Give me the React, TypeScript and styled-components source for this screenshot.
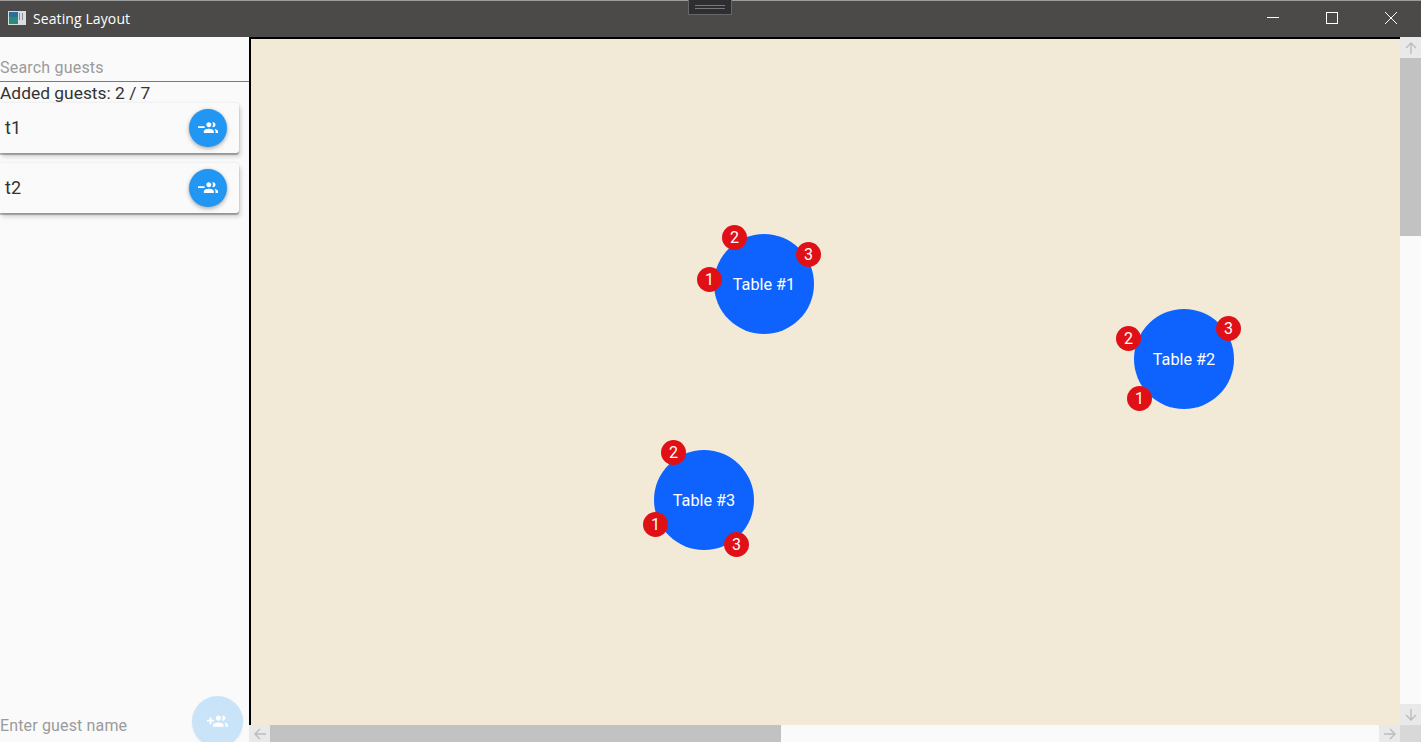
import React from "react";
import styled, { createGlobalStyle } from "styled-components";

const GlobalStyle = createGlobalStyle`
  html, body {
    margin: 0;
    padding: 0;
    width: 100%;
    height: 100%;
    overflow: hidden;
    background: #fafafa;
    font-family: Roboto, "Liberation Sans", sans-serif;
  }
  #root { height: 100%; }
`;

const Window = styled.div`
  display: flex;
  flex-direction: column;
  width: 1421px;
  height: 742px;
  overflow: hidden;
`;

const TitleBar = styled.header`
  position: relative;
  display: flex;
  align-items: center;
  flex: 0 0 37px;
  box-sizing: border-box;
  padding: 0 1px 2px 0;
  border-top: 1px solid #9c9c9c;
  background: #4b4a48;
  color: #fff;
`;

const AppIcon = styled.svg`
  width: 18px;
  height: 14px;
  margin: 0 7px 0 8px;
`;

const Title = styled.span`
  flex: 1;
  font-family: "Open Sans", "Noto Sans", sans-serif;
  font-size: 14px;
  letter-spacing: 0.1px;
`;

const DragHandle = styled.div`
  position: absolute;
  top: -1px;
  left: 688px;
  display: flex;
  flex-direction: column;
  justify-content: center;
  gap: 2px;
  box-sizing: border-box;
  width: 44px;
  height: 15px;
  padding: 0 6px;
  background: #2e2e31;
  border: 1px solid #66676a;
  border-top: 0;
`;

const HandleLine = styled.div`
  height: 1px;
  background: #77787a;
`;

const WindowButton = styled.button`
  display: flex;
  align-items: center;
  justify-content: center;
  width: 59px;
  height: 34px;
  padding: 0;
  border: 0;
  background: transparent;
  color: #fff;
`;

const Body = styled.div`
  display: flex;
  flex: 1;
  min-height: 0;
`;

const Sidebar = styled.aside`
  display: flex;
  flex-direction: column;
  flex: 0 0 249px;
  overflow: hidden;
  background: #fafafa;
`;

const SearchInput = styled.input`
  display: block;
  box-sizing: border-box;
  width: 100%;
  height: 45px;
  padding: 17px 0 0;
  border: 0;
  border-bottom: 1px solid #7a7a7a;
  outline: 0;
  background: transparent;
  font: 16px Roboto, sans-serif;
  letter-spacing: 0.2px;
  &::placeholder { color: #9b9b9b; opacity: 1; }
`;

const Counter = styled.div`
  box-sizing: border-box;
  height: 21px;
  padding-top: 1px;
  font-size: 17.4px;
  line-height: 21px;
  color: #333;
`;

const GuestList = styled.ul`
  display: flex;
  flex-direction: column;
  flex: 1;
  gap: 10px;
  margin: 0;
  padding: 0 10px 0 0;
  list-style: none;
`;

const GuestCard = styled.li`
  display: flex;
  align-items: center;
  justify-content: space-between;
  height: 50px;
  padding: 0 12px 0 5px;
  border-radius: 0 3px 3px 0;
  background: #fafafa;
  box-shadow: 0 2px 1px rgba(0, 0, 0, 0.28), 2px 4px 4px rgba(0, 0, 0, 0.14), 0 0 3px rgba(0, 0, 0, 0.1);
`;

const GuestName = styled.span`
  margin-top: -2px;
  font-size: 18px;
  color: #333;
`;

const RoundButton = styled.button<{ $size: number; $faded?: boolean }>`
  display: flex;
  align-items: center;
  justify-content: center;
  flex: none;
  width: ${({ $size }) => $size}px;
  height: ${({ $size }) => $size}px;
  padding: 0;
  border: 0;
  border-radius: 50%;
  color: #fff;
  background: ${({ $faded }) => ($faded ? "#c9e3f9" : "#2196f3")};
  box-shadow: ${({ $faded }) =>
    $faded ? "0 1px 2px rgba(0,0,0,0.08)" : "0 2px 4px rgba(0,0,0,0.28), 0 0 3px rgba(0,0,0,0.12)"};
`;

const AddRow = styled.div`
  display: flex;
  align-items: flex-end;
  gap: 10px;
  height: 46px;
  padding-right: 6px;
`;

const NameInput = styled.input`
  flex: 1;
  min-width: 0;
  box-sizing: border-box;
  height: 34px;
  padding: 0;
  border: 0;
  outline: 0;
  background: transparent;
  font: 16px Roboto, sans-serif;
  letter-spacing: 0.15px;
  &::placeholder { color: #9b9b9b; opacity: 1; }
`;

const AddButtonSlot = styled.div`
  margin-bottom: -5px;
`;

const Workspace = styled.main`
  display: grid;
  flex: 1;
  grid-template-columns: 1151px 21px;
  grid-template-rows: 688px 17px;
  min-width: 0;
`;

const Canvas = styled.div`
  position: relative;
  overflow: hidden;
  border-top: 2px solid #000;
  border-left: 2px solid #000;
  background: #f2e9d7;
`;

const TableCircle = styled.div<{ $x: number; $y: number }>`
  position: absolute;
  left: ${({ $x }) => $x - 50 - 251}px;
  top: ${({ $y }) => $y - 50 - 39}px;
  display: flex;
  align-items: center;
  justify-content: center;
  width: 100px;
  height: 100px;
  border-radius: 50%;
  background: #0e63ff;
  color: #fff;
  font-size: 16.2px;
`;

const Seat = styled.span<{ $dx: number; $dy: number }>`
  position: absolute;
  left: ${({ $dx }) => 50 + $dx - 12.5}px;
  top: ${({ $dy }) => 50 + $dy - 12.5}px;
  display: flex;
  align-items: center;
  justify-content: center;
  width: 25px;
  height: 25px;
  border-radius: 50%;
  background: #df1116;
  color: #fff;
  font-size: 16px;
`;

const VerticalBar = styled.div`
  display: flex;
  flex-direction: column;
  background: #fafafa;
`;

const HorizontalBar = styled.div`
  display: flex;
  background: #fafafa;
`;

const ArrowButton = styled.div<{ $long?: boolean }>`
  display: flex;
  align-items: center;
  justify-content: center;
  flex: none;
  width: 21px;
  height: ${({ $long }) => ($long ? "21px" : "100%")};
  background: #e9e9e9;
  color: #bcbcbc;
`;

const VThumb = styled.div`
  flex: 0 0 178px;
  background: #c2c2c2;
`;

const HThumb = styled.div`
  flex: 0 0 511px;
  background: #c2c2c2;
`;

const Track = styled.div`
  flex: 1;
`;

const Corner = styled.div`
  background: #d8d8d8;
`;

const GROUP =
  "M18 11c1.66 0 2.99-1.34 2.99-3S19.66 5 18 5c-.32 0-.63.05-.91.14.57.81.9 1.79.9 2.86s-.34 2.04-.9 2.86c.28.09.59.14.91.14zm-5 0c1.66 0 2.99-1.34 2.99-3S14.66 5 13 5s-3 1.34-3 3 1.34 3 3 3zm6.62 2.16c.83.73 1.38 1.66 1.38 2.84v2h3v-2c0-1.54-2.37-2.49-4.38-2.84zM13 13c-2 0-6 1-6 3v2h12v-2c0-2-4-3-6-3z";

const GroupRemoveIcon = () => (
  <svg width="20" height="20" viewBox="0 0 24 24" fill="currentColor">
    <path d={`M8 10H0v2h8v-2z${GROUP}`} />
  </svg>
);

const GroupAddIcon = () => (
  <svg width="21" height="21" viewBox="0 0 24 24" fill="currentColor">
    <path d={`M8 10H5V7H3v3H0v2h3v3h2v-3h3v-2z${GROUP}`} />
  </svg>
);

const Arrow = ({ rotate }: { rotate: number }) => (
  <svg width="14" height="14" viewBox="0 0 14 14" fill="none" stroke="currentColor" strokeWidth="1.4" transform={`rotate(${rotate})`}>
    <path d="M7 13V2M2 7l5-5 5 5" />
  </svg>
);

const tables = [
  { name: "Table #1", x: 764, y: 284, seats: [[-54.5, -5], [-29.5, -47], [44.5, -30]] },
  { name: "Table #2", x: 1184, y: 359, seats: [[-44.5, 39], [-55.5, -21], [44.5, -31]] },
  { name: "Table #3", x: 704, y: 500, seats: [[-48.5, 24], [-30.5, -48], [32.5, 44]] },
];

const guests = ["t1", "t2"];

export default function App() {
  return (
    <Window>
      <GlobalStyle />
      <TitleBar>
        <AppIcon viewBox="0 0 18 14">
          <rect width="18" height="14" fill="#d8dde0" />
          <rect x="1" y="1" width="9" height="12" fill="#2c8a78" />
          <rect x="1" y="1" width="9" height="5" fill="#2a6f9c" />
          <rect x="11" y="2" width="1" height="7" fill="#8a8f92" />
          <rect x="14" y="2" width="1" height="7" fill="#8a8f92" />
        </AppIcon>
        <Title>Seating Layout</Title>
        <DragHandle>
          <HandleLine />
          <HandleLine />
        </DragHandle>
        <WindowButton aria-label="Minimize">
          <svg width="12" height="12" viewBox="0 0 12 12" stroke="currentColor">
            <path d="M0 5.5h12" />
          </svg>
        </WindowButton>
        <WindowButton aria-label="Maximize">
          <svg width="12" height="12" viewBox="0 0 12 12" fill="none" stroke="currentColor">
            <rect x=".5" y=".5" width="11" height="11" />
          </svg>
        </WindowButton>
        <WindowButton aria-label="Close">
          <svg width="12" height="12" viewBox="0 0 12 12" stroke="currentColor">
            <path d="M0 0l12 12M12 0L0 12" />
          </svg>
        </WindowButton>
      </TitleBar>
      <Body>
        <Sidebar>
          <SearchInput placeholder="Search guests" />
          <Counter>Added guests: 2 / 7</Counter>
          <GuestList>
            {guests.map((guest) => (
              <GuestCard key={guest}>
                <GuestName>{guest}</GuestName>
                <RoundButton $size={38}>
                  <GroupRemoveIcon />
                </RoundButton>
              </GuestCard>
            ))}
          </GuestList>
          <AddRow>
            <NameInput placeholder="Enter guest name" />
            <AddButtonSlot>
              <RoundButton $size={51} $faded>
                <GroupAddIcon />
              </RoundButton>
            </AddButtonSlot>
          </AddRow>
        </Sidebar>
        <Workspace>
          <Canvas>
            {tables.map((table) => (
              <TableCircle key={table.name} $x={table.x} $y={table.y}>
                {table.name}
                {table.seats.map(([dx, dy], index) => (
                  <Seat key={index} $dx={dx} $dy={dy}>
                    {index + 1}
                  </Seat>
                ))}
              </TableCircle>
            ))}
          </Canvas>
          <VerticalBar>
            <ArrowButton $long>
              <Arrow rotate={0} />
            </ArrowButton>
            <VThumb />
            <Track />
            <ArrowButton $long>
              <Arrow rotate={180} />
            </ArrowButton>
          </VerticalBar>
          <HorizontalBar>
            <ArrowButton>
              <Arrow rotate={270} />
            </ArrowButton>
            <HThumb />
            <Track />
            <ArrowButton>
              <Arrow rotate={90} />
            </ArrowButton>
          </HorizontalBar>
          <Corner />
        </Workspace>
      </Body>
    </Window>
  );
}
